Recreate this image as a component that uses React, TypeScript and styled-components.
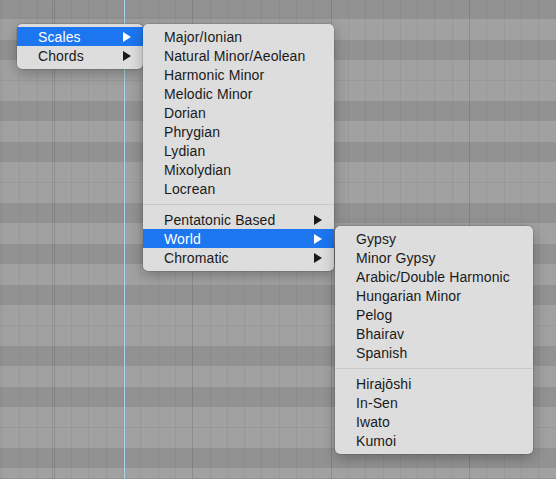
import React from "react";
import styled, { createGlobalStyle } from "styled-components";

const Global = createGlobalStyle`
  html, body { margin: 0; padding: 0; overflow: hidden; }
  body { font-family: "Liberation Sans", Arial, sans-serif; }
`;

const ROW = 20.4;
const DARK = "#929292";
const LIGHT = "#a1a1a1";
const P = 12 * ROW;

const rowStops = (() => {
  const dark = new Set([0, 2, 5, 7, 10]);
  const parts: string[] = [];
  for (let i = 0; i < 12; i++) {
    const c = dark.has(i) ? DARK : LIGHT;
    parts.push(`${c} ${(i * ROW).toFixed(1)}px ${((i + 1) * ROW).toFixed(1)}px`);
  }
  return parts.join(", ");
})();

const Canvas = styled.div`
  position: relative;
  width: 100vw;
  height: 100vh;
  overflow: hidden;
  background-image:
    repeating-linear-gradient(90deg, rgba(0,0,0,0.08) 0 1px, transparent 1px 138.4px),
    repeating-linear-gradient(90deg, rgba(0,0,0,0.05) 0 1px, transparent 1px 17.3px),
    repeating-linear-gradient(180deg,
      transparent 0 ${(4 * ROW - 0.5).toFixed(1)}px,
      rgba(0,0,0,0.05) ${(4 * ROW - 0.5).toFixed(1)}px ${(4 * ROW + 0.5).toFixed(1)}px,
      transparent ${(4 * ROW + 0.5).toFixed(1)}px ${(9 * ROW - 0.5).toFixed(1)}px,
      rgba(0,0,0,0.05) ${(9 * ROW - 0.5).toFixed(1)}px ${(9 * ROW + 0.5).toFixed(1)}px,
      transparent ${(9 * ROW + 0.5).toFixed(1)}px ${P.toFixed(1)}px),
    repeating-linear-gradient(180deg, ${rowStops});
  background-position: 54px 0, 2px 0, 0 -1px, 0 -1px;
`;

const Playhead = styled.div`
  position: absolute;
  left: 124px;
  top: 0;
  bottom: 0;
  width: 1px;
  background: #a6d9ec;
`;

const Menu = styled.div<{ $x: number; $y: number; $w: number }>`
  position: absolute;
  left: ${(p) => p.$x}px;
  top: ${(p) => p.$y}px;
  width: ${(p) => p.$w}px;
  box-sizing: border-box;
  padding: 3px 0 4px;
  background: #dddddd;
  border-radius: 5px;
  box-shadow: 0 0 0 0.5px rgba(0, 0, 0, 0.18), 0 4px 14px rgba(0, 0, 0, 0.28);
  display: flex;
  flex-direction: column;
`;

const Item = styled.div<{ $active?: boolean }>`
  box-sizing: border-box;
  height: 19px;
  display: flex;
  align-items: center;
  justify-content: space-between;
  padding: 1px 12px 0 21px;
  font-size: 14px;
  letter-spacing: 0.1px;
  line-height: 18px;
  white-space: nowrap;
  color: ${(p) => (p.$active ? "#ffffff" : "#1a1a1a")};
  background: ${(p) => (p.$active ? "#1c76f0" : "transparent")};
`;

const Separator = styled.div`
  height: 1px;
  margin: 6px 0 5px;
  background: #c9c9c9;
`;

const Arrow = ({ color }: { color: string }) => (
  <svg width="8" height="10" viewBox="0 0 8 10" aria-hidden>
    <polygon points="0,0 8,5 0,10" fill={color} />
  </svg>
);

type Entry = { label?: string; sub?: boolean; active?: boolean; sep?: boolean };

const MenuList = ({ entries, x, y, w }: { entries: Entry[]; x: number; y: number; w: number }) => (
  <Menu $x={x} $y={y} $w={w}>
    {entries.map((e, i) =>
      e.sep ? (
        <Separator key={i} />
      ) : (
        <Item key={i} $active={e.active}>
          <span>{e.label}</span>
          {e.sub && <Arrow color={e.active ? "#ffffff" : "#1a1a1a"} />}
        </Item>
      )
    )}
  </Menu>
);

const menu1: Entry[] = [
  { label: "Scales", sub: true, active: true },
  { label: "Chords", sub: true },
];

const menu2: Entry[] = [
  { label: "Major/Ionian" },
  { label: "Natural Minor/Aeolean" },
  { label: "Harmonic Minor" },
  { label: "Melodic Minor" },
  { label: "Dorian" },
  { label: "Phrygian" },
  { label: "Lydian" },
  { label: "Mixolydian" },
  { label: "Locrean" },
  { sep: true },
  { label: "Pentatonic Based", sub: true },
  { label: "World", sub: true, active: true },
  { label: "Chromatic", sub: true },
];

const menu3: Entry[] = [
  { label: "Gypsy" },
  { label: "Minor Gypsy" },
  { label: "Arabic/Double Harmonic" },
  { label: "Hungarian Minor" },
  { label: "Pelog" },
  { label: "Bhairav" },
  { label: "Spanish" },
  { sep: true },
  { label: "Hirajōshi" },
  { label: "In-Sen" },
  { label: "Iwato" },
  { label: "Kumoi" },
];

export default function App() {
  return (
    <>
      <Global />
      <Canvas>
        <Playhead />
        <MenuList entries={menu1} x={17} y={24} w={126} />
        <MenuList entries={menu2} x={143} y={24} w={191} />
        <MenuList entries={menu3} x={335} y={226} w={198} />
      </Canvas>
    </>
  );
}
